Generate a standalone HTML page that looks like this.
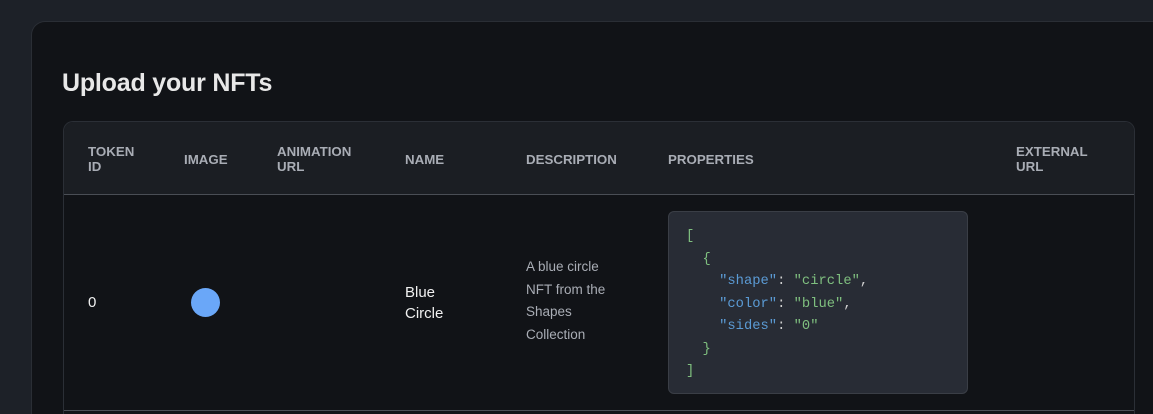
<!DOCTYPE html>
<html style="width:1153px;height:414px;overflow:hidden"><head><style>
*{margin:0;padding:0;box-sizing:border-box}
body{width:1153px;height:414px;background:#1d2128;overflow:hidden;position:relative;font-family:"Liberation Sans",Arial,sans-serif}
.card{position:absolute;left:31px;top:21px;width:1122px;height:393px;background:#111317;border:1px solid #2a2e35;border-right:none;border-bottom:none;border-radius:14px 0 0 0}
h1{position:absolute;left:62px;top:69px;font-size:25px;font-weight:bold;color:#e8e8e8;letter-spacing:-0.2px}
.tbl{position:absolute;left:63px;top:121px;width:1072px;height:293px;border:1px solid #2b2f36;border-bottom:none;border-radius:10px 10px 0 0;overflow:hidden}
.hdr{position:absolute;left:0;top:0;right:0;height:73px;background:#1b1e23;border-bottom:1px solid #4a4e55}
.h{position:absolute;color:#a9adb5;font-size:13.3px;font-weight:bold;line-height:15px}
.t{position:absolute;color:#f0f0f0;font-size:15px;line-height:21px}
.d{position:absolute;color:#a9adb5;font-size:13.5px;line-height:22.5px}
.rowb{position:absolute;left:0;right:0;top:288px;border-top:1px solid #4a4e55}
.code{position:absolute;left:604px;top:89px;width:300px;height:183px;background:#282c35;border:1px solid #3a3e46;border-radius:6px;font-family:"Liberation Mono",monospace;font-size:13.8px;line-height:22.5px;padding:14px 0 0 17px;white-space:pre;color:#7fbf7f}
.k{color:#5b9bd5}.p{color:#d0d0d0}
.dot{position:absolute;left:127px;top:166px;width:29px;height:29px;border-radius:50%;background:#6aa7f8}
</style></head><body>
<div class="card"></div>
<h1>Upload your NFTs</h1>
<div class="tbl">
<div class="hdr">
<div class="h" style="left:24px;top:22px">TOKEN<br>ID</div>
<div class="h" style="left:120px;top:30px">IMAGE</div>
<div class="h" style="left:213px;top:22px">ANIMATION<br>URL</div>
<div class="h" style="left:341px;top:30px">NAME</div>
<div class="h" style="left:462px;top:30px">DESCRIPTION</div>
<div class="h" style="left:604px;top:30px">PROPERTIES</div>
<div class="h" style="left:952px;top:22px">EXTERNAL<br>URL</div>
</div>
<div class="t" style="left:24px;top:170px">0</div>
<div class="dot"></div>
<div class="t" style="left:341px;top:160px">Blue<br>Circle</div>
<div class="d" style="left:462px;top:134px">A blue circle<br>NFT from the<br>Shapes<br>Collection</div>
<div class="code">[
  {
    <span class="k">"shape"</span><span class="p">: </span>"circle"<span class="p">,</span>
    <span class="k">"color"</span><span class="p">: </span>"blue"<span class="p">,</span>
    <span class="k">"sides"</span><span class="p">: </span>"0"
  }
]</div>
<div class="rowb"></div>
</div>
</body></html>
